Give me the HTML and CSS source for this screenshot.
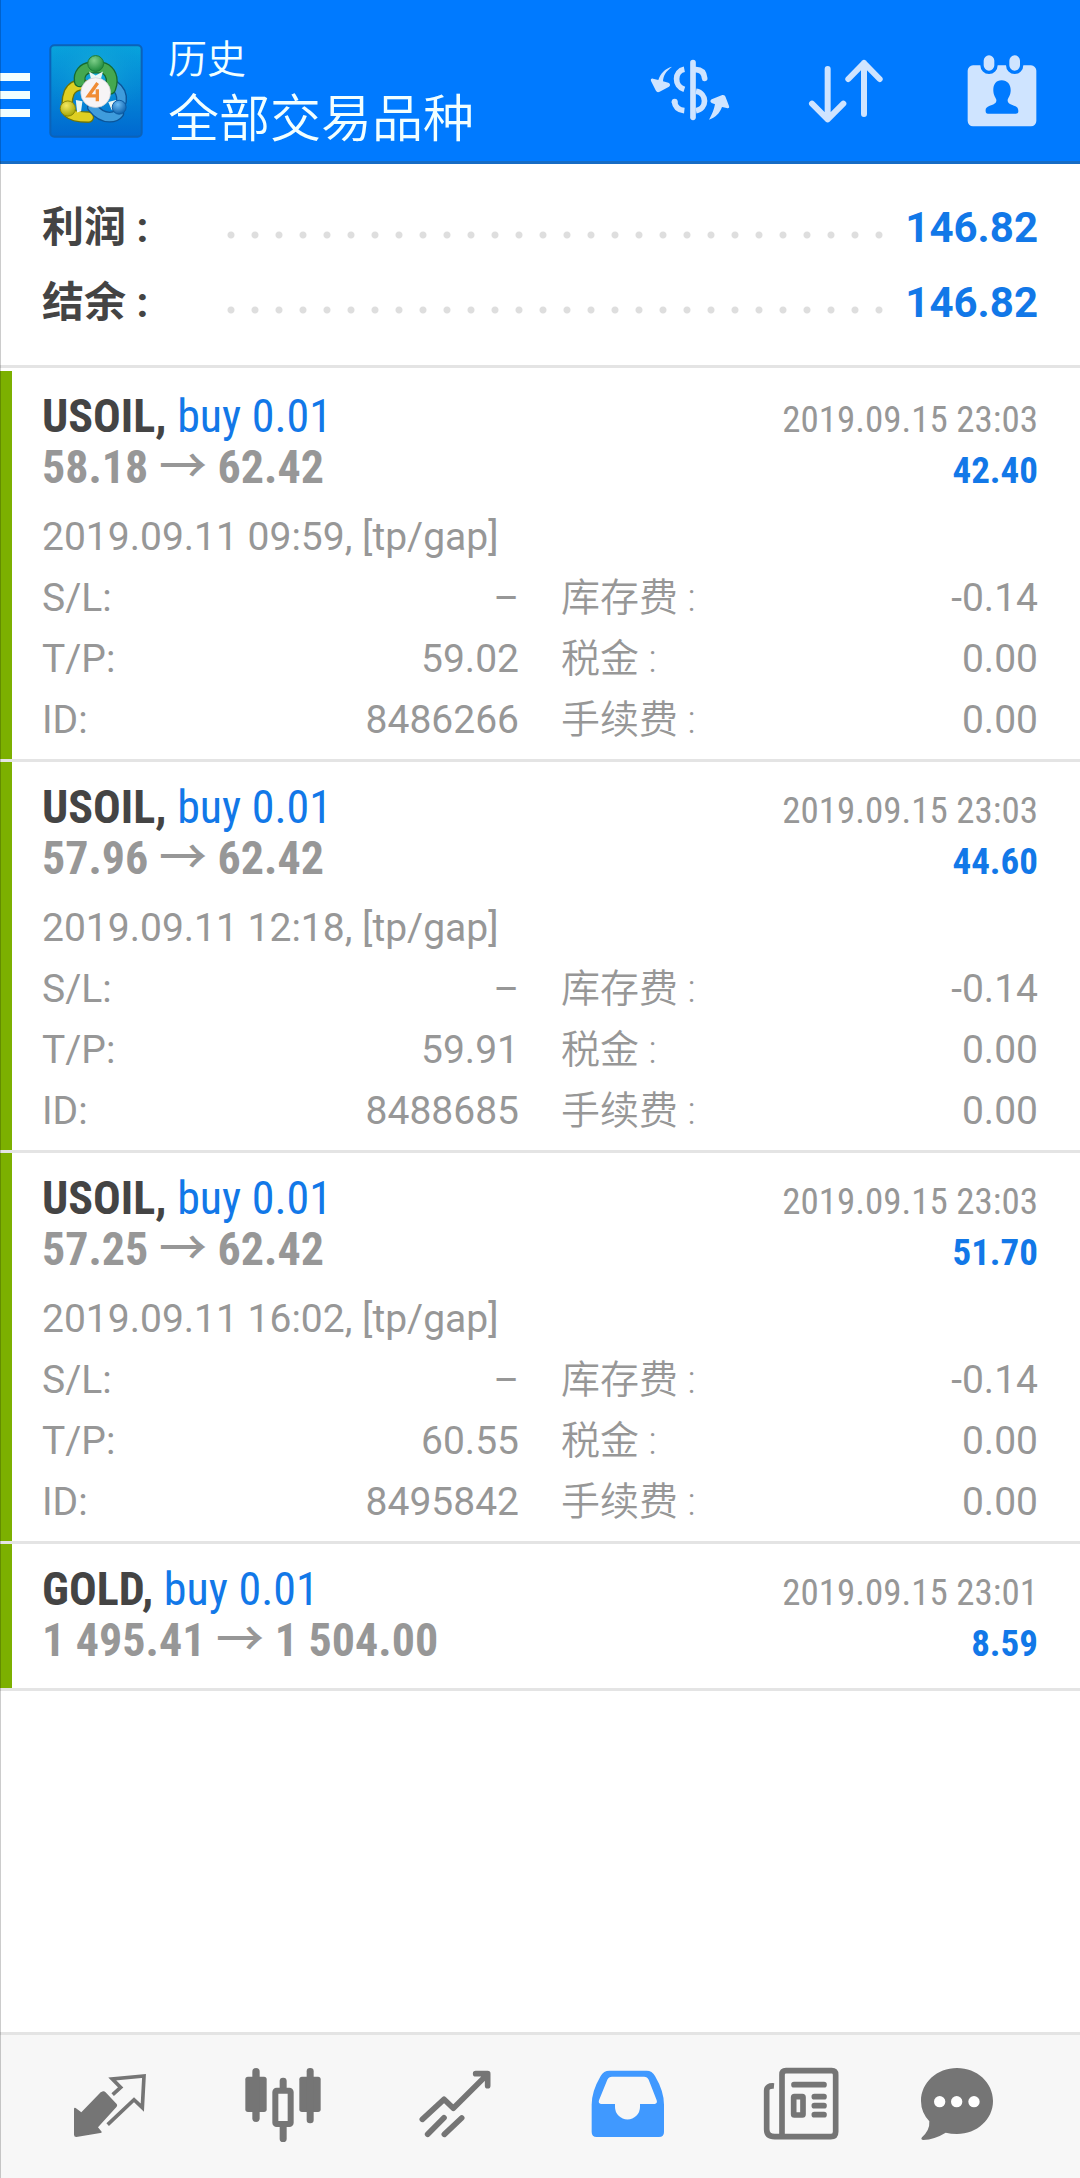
FILE: index.html
```html
<!DOCTYPE html>
<html lang="zh-CN">
<head>
<meta charset="utf-8">
<meta name="viewport" content="width=device-width">
<title>历史</title>
<link rel="stylesheet" href="styles.css">
</head>
<body>
<header class="bar">
  <button class="menu" type="button" aria-label="菜单">
    <svg width="30" height="52" viewBox="0 0 30 52" fill="#f2ffff"><path d="M0 8h30v8H0zM0 26h30v8H0zM0 44h30v8H0z"/></svg>
  </button>
  <svg class="logo" viewBox="147 43 284 284" aria-hidden="true">
    <defs>
      <linearGradient id="tile" x1="0" y1="0" x2="0" y2="1"><stop offset="0" stop-color="#08a4dc"/><stop offset="1" stop-color="#0068d0"/></linearGradient>
      <radialGradient id="glow" cx=".5" cy=".3" r=".55"><stop offset="0" stop-color="#18b4d8" stop-opacity=".8"/><stop offset="1" stop-color="#0a8bd8" stop-opacity="0"/></radialGradient>
      <radialGradient id="green" cx=".4" cy=".3" r=".7"><stop offset="0" stop-color="#7fd08a"/><stop offset="1" stop-color="#1f8a3c"/></radialGradient>
      <radialGradient id="gold" cx=".4" cy=".3" r=".7"><stop offset="0" stop-color="#f4e860"/><stop offset="1" stop-color="#a8a808"/></radialGradient>
      <radialGradient id="blue" cx=".4" cy=".3" r=".7"><stop offset="0" stop-color="#6cbcf4"/><stop offset="1" stop-color="#0d62ae"/></radialGradient>
    </defs>
    <rect x="151" y="47" width="276" height="276" rx="12" fill="url(#tile)" stroke="#0b62b8" stroke-width="6"/>
    <rect x="155" y="51" width="268" height="268" rx="9" fill="url(#glow)"/>
    <path d="M250 166c-20 0-34 6-42 24-4 10-6 20-6 32M206 250c12 12 34 14 60 14" fill="none" stroke="#6d7408" stroke-width="35" stroke-linecap="round"/>
    <path d="M250 166c-20 0-34 6-42 24-4 10-6 20-6 32M206 250c12 12 34 14 60 14" fill="none" stroke="#dfcf22" stroke-width="27" stroke-linecap="round"/>
    <path d="M346 170c14 10 22 26 20 46M278 234c14 18 30 30 52 30 12 0 22-4 28-12" fill="none" stroke="#0b5498" stroke-width="33" stroke-linecap="round"/>
    <path d="M346 170c14 10 22 26 20 46M278 234c14 18 30 30 52 30 12 0 22-4 28-12" fill="none" stroke="#3f9cdc" stroke-width="25" stroke-linecap="round"/>
    <path d="M240 156c-4-24 12-40 32-42h34c20 4 34 24 30 50l-4 14" fill="none" stroke="#176a30" stroke-width="36" stroke-linecap="round"/>
    <path d="M240 156c-4-24 12-40 32-42h34c20 4 34 24 30 50l-4 14" fill="none" stroke="#44a850" stroke-width="28" stroke-linecap="round"/>
    <path d="M268 126l20 12 22-12-6 22h-30zM228 212l20 4-4 30-12 4zM350 212l-24 6 10 24 14 4z" fill="#e8f6f4"/>
    <circle cx="288" cy="102" r="24" fill="url(#green)" stroke="#1b7a38" stroke-width="3"/>
    <circle cx="204" cy="238" r="23" fill="url(#gold)" stroke="#878508" stroke-width="3"/>
    <circle cx="359" cy="234" r="21" fill="url(#blue)" stroke="#0d5ba2" stroke-width="3"/>
    <circle cx="288" cy="190" r="45" fill="#f6f4f6" stroke="#c8ccd0" stroke-width="2"/>
    <path d="M294 161L266 200h31M293 180v36" fill="none" stroke="#f08c34" stroke-width="10"/>
  </svg>
  <div class="titles">
    <h1>历史</h1>
    <p>全部交易品种</p>
  </div>
  <div class="tools">
    <button type="button" aria-label="交易品种">
      <svg viewBox="144 87 252 252" fill="none" stroke="#cfe4ff" stroke-width="17">
        <path d="M279 128V292" stroke-linecap="round"/>
        <path d="M253 148c-30 6-32 50 0 60M223 244c2 16 12 26 30 28"/>
        <path d="M288 149c14 0 24 8 26 26" stroke-linecap="round"/><path d="M288 214c34 6 34 52 0 58"/>
        <g fill="#cfe4ff" stroke="none"><circle cx="224" cy="245" r="9"/><path d="M216 140c-18 14-26 26-27 44l16 4c6 3 7 8 2 12l-28 15c-5 3-10 1-12-4l-14-28c-2-6 2-8 6-7l16 4c6-20 20-34 41-40zM327 299c10-18 15-30 18-46l-10-4c-6-4-4-8 0-11l30-12c6-2 10 0 12 6l10 26c2 6-2 8-7 6l-14-3c-8 20-20 32-39 38z"/></g>
      </svg>
    </button>
    <button type="button" aria-label="排序">
      <svg viewBox="613 87 252 252" fill="none" stroke="#cfe4ff" stroke-width="18" stroke-linecap="round" stroke-linejoin="round"><path d="M684 147V298M637 251l47 47 47-47M793 282V129M746 177l47-48 47 48"/></svg>
    </button>
    <button type="button" aria-label="日期">
      <svg viewBox="1081 87 252 252"><rect x="1104" y="136" width="206" height="183" rx="16" fill="#cfe4ff"/><g fill="#cfe4ff" stroke="#007aff" stroke-width="10"><path d="M1147 122a21 21 0 0 1 42 0v14a21 21 0 0 1-42 0zM1224 122a21 21 0 0 1 42 0v14a21 21 0 0 1-42 0z"/></g><path d="M1206 181c-18 0-26 14-25 32 1 14 6 18 9 26 1 10-6 14-20 18-10 4-13 8-12 17 0 5 2 7 7 7h84c5 0 7-2 7-7 0-9-3-14-13-17-14-4-20-8-19-18 3-8 8-12 9-26 1-18-9-32-27-32z" fill="#007aff"/></svg>
    </button>
  </div>
</header>

<main>
  <dl class="summary">
    <div><dt>利润 :</dt><dd>146.82</dd></div>
    <div><dt>结余 :</dt><dd>146.82</dd></div>
  </dl>

  <ul class="deals">
    <li class="deal open">
      <div class="row"><h2>USOIL, <span>buy 0.01</span></h2><time>2019.09.15 23:03</time></div>
      <div class="row"><p class="price">58.18 <i>→</i> 62.42</p><p class="profit">42.40</p></div>
      <p class="note">2019.09.11 09:59, [tp/gap]</p>
      <dl class="info">
        <div><dt>S/L:</dt><dd>–</dd></div><div><dt>库存费 :</dt><dd>-0.14</dd></div>
        <div><dt>T/P:</dt><dd>59.02</dd></div><div><dt>税金 :</dt><dd>0.00</dd></div>
        <div><dt>ID:</dt><dd>8486266</dd></div><div><dt>手续费 :</dt><dd>0.00</dd></div>
      </dl>
    </li>
    <li class="deal open">
      <div class="row"><h2>USOIL, <span>buy 0.01</span></h2><time>2019.09.15 23:03</time></div>
      <div class="row"><p class="price">57.96 <i>→</i> 62.42</p><p class="profit">44.60</p></div>
      <p class="note">2019.09.11 12:18, [tp/gap]</p>
      <dl class="info">
        <div><dt>S/L:</dt><dd>–</dd></div><div><dt>库存费 :</dt><dd>-0.14</dd></div>
        <div><dt>T/P:</dt><dd>59.91</dd></div><div><dt>税金 :</dt><dd>0.00</dd></div>
        <div><dt>ID:</dt><dd>8488685</dd></div><div><dt>手续费 :</dt><dd>0.00</dd></div>
      </dl>
    </li>
    <li class="deal open">
      <div class="row"><h2>USOIL, <span>buy 0.01</span></h2><time>2019.09.15 23:03</time></div>
      <div class="row"><p class="price">57.25 <i>→</i> 62.42</p><p class="profit">51.70</p></div>
      <p class="note">2019.09.11 16:02, [tp/gap]</p>
      <dl class="info">
        <div><dt>S/L:</dt><dd>–</dd></div><div><dt>库存费 :</dt><dd>-0.14</dd></div>
        <div><dt>T/P:</dt><dd>60.55</dd></div><div><dt>税金 :</dt><dd>0.00</dd></div>
        <div><dt>ID:</dt><dd>8495842</dd></div><div><dt>手续费 :</dt><dd>0.00</dd></div>
      </dl>
    </li>
    <li class="deal">
      <div class="row"><h2>GOLD, <span>buy 0.01</span></h2><time>2019.09.15 23:01</time></div>
      <div class="row"><p class="price">1 495.41 <i>→</i> 1 504.00</p><p class="profit">8.59</p></div>
    </li>
  </ul>
</main>

<nav class="tabs">
  <a href="#quotes" aria-label="行情">
    <svg viewBox="33 48 234 234"><path d="M129 124q4-1 7 2l34 36q3 4 0 8l-56 62 11 13q1 4-4 4l-72 12q-7 0-7-7V176q1-4 5-2l17 13 58-60z" fill="currentColor"/><path d="M158 134l24-22-25-25 95-9-5 95-25-24-79 75" fill="none" stroke="currentColor" stroke-width="11"/></svg>
  </a>
  <a href="#charts" aria-label="图表">
    <svg viewBox="548 48 234 234" fill="currentColor"><rect x="552" y="80" width="64" height="106" rx="8"/><rect x="573" y="54" width="22" height="162" rx="11"/><rect x="714" y="80" width="64" height="106" rx="8"/><rect x="736" y="54" width="21" height="166" rx="10"/><rect x="655" y="83" width="21" height="60" rx="10"/><rect x="655" y="210" width="21" height="66" rx="10"/><rect x="642" y="122" width="46" height="100" rx="4" fill="#f7f7f7" stroke="currentColor" stroke-width="18"/></svg>
  </a>
  <a href="#trade" aria-label="交易">
    <svg viewBox="1064 48 234 234" fill="none" stroke="currentColor" stroke-width="17" stroke-linecap="round" stroke-linejoin="round"><path d="M1083 208l65-60 28 27 98-98M1243 71h36v36"/><path d="M1099 253l49-50M1149 253l52-49"/></svg>
  </a>
  <a href="#history" aria-label="历史" class="on" aria-current="page">
    <svg viewBox="23 48 234 234" fill="currentColor" fill-rule="evenodd"><path d="M84 62h112q16 0 25 16 27 46 27 86v82q0 15-15 15H46q-15 0-15-15v-82q0-40 27-86 9-16 26-16zm8 18q-10 0-14 9l-25 62q-3 10 6 11h42v9a37 37 0 0 0 75 0v-9h44q9-1 6-11l-24-62q-4-9-14-9z"/></svg>
  </a>
  <a href="#news" aria-label="新闻">
    <svg viewBox="543 48 234 234" fill="none" stroke="currentColor" stroke-width="17"><path d="M579 108q-22-2-22 14v116q0 22 24 22h168q15 0 15-15V74q0-12-12-12H615q-12 0-12 12v186"/><path d="M639 104h90M700 140h29M700 167h29M700 194h29" stroke-linecap="round"/><rect x="638" y="140" width="28" height="55" rx="2"/></svg>
  </a>
  <a href="#mail" aria-label="消息">
    <svg viewBox="1018 48 234 234" fill="currentColor"><path d="M1135 54c60 0 108 44 108 99s-48 99-108 99q-18 0-34-4-32 20-68 22-8-2-3-8 24-22 22-48-25-27-25-61c0-55 48-99 108-99z"/><g fill="#fff"><circle cx="1083" cy="155" r="17"/><circle cx="1134" cy="155" r="17"/><circle cx="1186" cy="155" r="17"/></g></svg>
  </a>
</nav>
</body>
</html>
```
FILE: styles.css
```css
* {
  box-sizing: border-box;
  margin: 0;
  padding: 0;
}

body {
  position: relative;
  display: flex;
  flex-direction: column;
  min-height: 100vh;
  background: #fff;
  color: #979797;
  font-family: Roboto, "Noto Sans CJK SC", sans-serif;
  font-size: 39px;
}

/* hairline down the left edge of the window */
body::before {
  content: "";
  position: absolute;
  inset: 0 auto 0 0;
  width: 1px;
  background: rgba(0, 0, 0, 0.2);
}

ul {
  list-style: none;
}

button {
  border: 0;
  background: none;
}

svg {
  display: block;
}

/* top bar */
.bar {
  display: flex;
  align-items: center;
  padding: 31px 0 10px;
  border-bottom: 3px solid #176cc4;
  background: #007aff;
  color: #f2ffff;
}

.logo {
  width: 94px;
  height: 94px;
  margin: 0 25px 0 19px;
}

.titles {
  flex: 1;
  font-weight: 350;
}

.titles h1 {
  font-size: 39px;
  line-height: 58px;
  font-weight: 350;
}

.titles p {
  font-size: 51px;
  line-height: 62px;
}

.tools {
  display: flex;
}

.tools button {
  display: flex;
  justify-content: center;
  width: 156px;
}

.tools svg {
  width: 84px;
  height: 84px;
}

/* totals */
.summary {
  padding: 26px 42px 25px;
  border-bottom: 3px solid #e4e4e4;
  font-size: 42px;
  font-weight: 700;
  line-height: 75px;
}

.summary div {
  display: flex;
}

.summary dt {
  width: 177px;
  color: #444;
}

.summary dd {
  display: flex;
  flex: 1;
  gap: 12px;
  color: #1278e8;
}

/* dotted leader between label and amount */
.summary dd::before {
  content: "";
  flex: 1;
  background: radial-gradient(circle, #dedede 3px, transparent 4px) 0 33px / 24px 24px repeat-x;
}

/* deals */
.deals {
  padding-top: 3px;
}

.deal {
  padding: 20px 42px 22px;
  border-bottom: 3px solid #e4e4e4;
  box-shadow: inset 12px 0 #7cb000;
}

.deal.open {
  padding-bottom: 8px;
}

.row {
  display: flex;
  justify-content: space-between;
  align-items: baseline;
  font-family: "Roboto Condensed", "Noto Sans CJK SC", sans-serif;
  font-size: 37px;
  line-height: 44px;
}

.row h2,
.price {
  font-size: 46px;
  font-weight: 700;
  line-height: 51px;
}

.row h2 {
  color: #444;
}

.row h2 span,
.profit {
  color: #1278e8;
}

.row h2 span {
  font-weight: 400;
}

.price i {
  font-size: 48px;
  font-style: normal;
  font-weight: 500;
  line-height: 1;
}

.profit {
  font-weight: 700;
}

.note {
  padding-top: 14px;
  line-height: 61px;
}

.info {
  display: grid;
  grid-template-columns: 1fr 1fr;
  column-gap: 42px;
  line-height: 61px;
}

.info div {
  display: flex;
  justify-content: space-between;
}

.info div:nth-child(even) dt {
  font-weight: 350;
}

/* bottom tabs */
.tabs {
  display: grid;
  grid-template-columns: repeat(5, 11fr) 9fr;
  margin-top: auto;
  padding: 31px 52px 34px 24px;
  border-top: 3px solid #e4e4e4;
  background: #f7f7f7;
  color: #757575;
}

.tabs a {
  display: flex;
  justify-content: center;
  color: inherit;
}

.tabs .on {
  color: #4099ff;
}

.tabs svg {
  width: 78px;
  height: 78px;
}
```
